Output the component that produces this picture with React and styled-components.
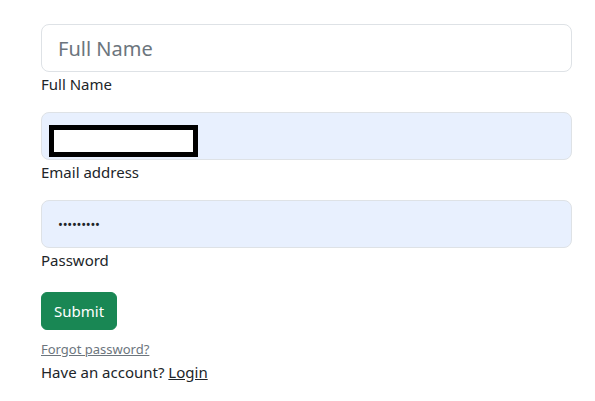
import React from 'react'
import styled, { createGlobalStyle } from 'styled-components'

const Global = createGlobalStyle`
  body {
    margin: 0;
    background: #fff;
    font-family: "Noto Sans", "Open Sans", sans-serif;
    color: #212529;
  }
`

const Page = styled.div`
  padding: 24px 23px 0 41px;
`

const Form = styled.form`
  display: flex;
  flex-direction: column;
`

const Field = styled.div`
  position: relative;
  margin-bottom: 16px;
`

const Input = styled.input`
  display: block;
  box-sizing: border-box;
  width: 100%;
  height: 48px;
  padding: 0 16px;
  border: 1px solid #dee2e6;
  border-radius: 8px;
  background: ${(p) => (p.$filled ? '#e8f0fe' : '#fff')};
  font-family: inherit;
  font-size: ${(p) => (p.$dots ? '13px' : '20px')};
  letter-spacing: ${(p) => (p.$dots ? '-0.25px' : 'normal')};
  color: #212529;
  outline: none;

  &::placeholder {
    color: #6c757d;
  }
`

const Label = styled.label`
  display: block;
  font-size: 15px;
  line-height: 24px;
`

const Redact = styled.span`
  position: absolute;
  left: 8px;
  top: 13px;
  width: 139px;
  height: 22px;
  border: 5px solid #000;
  background: #fff;
`

const Submit = styled.button`
  align-self: flex-start;
  margin-top: 4px;
  height: 38px;
  padding: 0 12px;
  border: 1px solid #198754;
  border-radius: 6px;
  background: #198754;
  color: #fff;
  font-family: inherit;
  font-size: 15px;
`

const Forgot = styled.a`
  margin-top: 9px;
  font-size: 13px;
  line-height: 21px;
  color: #6c757d;
  text-decoration: underline;
  align-self: flex-start;
`

const Note = styled.p`
  margin: 0;
  font-size: 15px;
  line-height: 24px;

  a {
    color: #212529;
    text-decoration: underline;
  }
`

export default function App() {
  return (
    <Page>
      <Global />
      <Form onSubmit={(e) => e.preventDefault()}>
        <Field>
          <Input type="text" placeholder="Full Name" />
          <Label>Full Name</Label>
        </Field>
        <Field>
          <Input type="text" $filled readOnly value="" />
          <Redact />
          <Label>Email address</Label>
        </Field>
        <Field>
          <Input type="text" $filled $dots readOnly value="•••••••••" />
          <Label>Password</Label>
        </Field>
        <Submit type="submit">Submit</Submit>
        <Forgot href="#">Forgot password?</Forgot>
        <Note>
          Have an account? <a href="#">Login</a>
        </Note>
      </Form>
    </Page>
  )
}
